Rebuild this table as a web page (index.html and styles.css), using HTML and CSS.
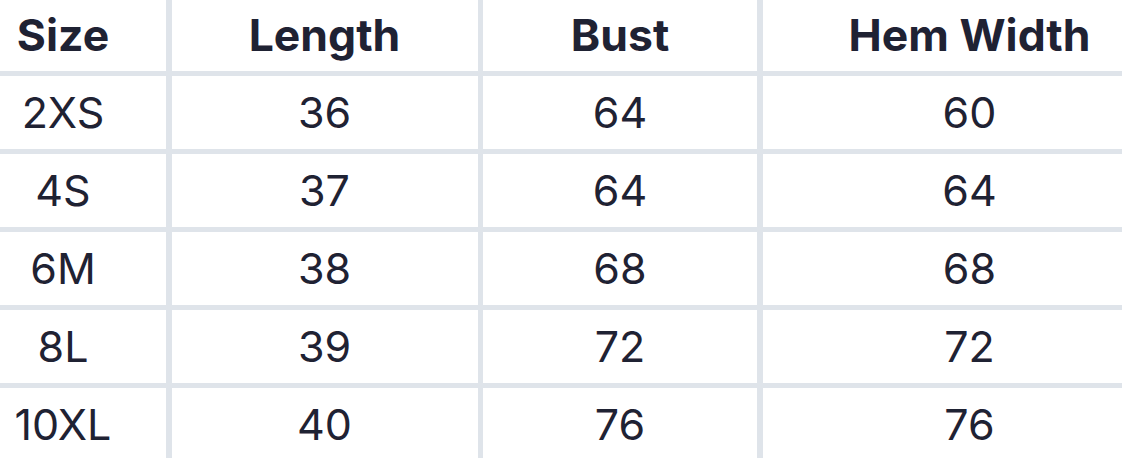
FILE: index.html
```html
<!DOCTYPE html>
<html>
<head>
<meta charset="utf-8">
<link rel="stylesheet" href="styles.css">
</head>
<body>
<div class="chart">
  <div class="cell head c1">Size</div>
  <div class="cell head">Length</div>
  <div class="cell head">Bust</div>
  <div class="cell head c4">Hem Width</div>

  <div class="cell c1">2XS</div>
  <div class="cell">36</div>
  <div class="cell">64</div>
  <div class="cell c4">60</div>

  <div class="cell c1">4S</div>
  <div class="cell">37</div>
  <div class="cell">64</div>
  <div class="cell c4">64</div>

  <div class="cell c1">6M</div>
  <div class="cell">38</div>
  <div class="cell">68</div>
  <div class="cell c4">68</div>

  <div class="cell c1">8L</div>
  <div class="cell">39</div>
  <div class="cell">72</div>
  <div class="cell c4">72</div>

  <div class="cell c1">10XL</div>
  <div class="cell">40</div>
  <div class="cell">76</div>
  <div class="cell c4">76</div>
</div>
</body>
</html>
```
FILE: styles.css
```css
html, body {
  margin: 0;
  padding: 0;
  background: #ffffff;
  overflow: hidden;
}
body {
  width: 1122px;
  height: 458px;
}
.chart {
  display: grid;
  grid-template-columns: 166px 306px 274px 414px;
  grid-template-rows: 71px repeat(5, 73px);
  column-gap: 5.5px;
  row-gap: 5px;
  background: #dfe4ea;
  width: max-content;
  font-family: Inter, "Noto Sans", sans-serif;
  color: #1f2233;
}
.cell {
  background: #ffffff;
  display: flex;
  align-items: center;
  justify-content: center;
  font-size: 43px;
  font-weight: 400;
  line-height: 1;
}
.head {
  font-size: 44.5px;
  font-weight: 700;
}
.c1 {
  padding-right: 40px;
}
```
